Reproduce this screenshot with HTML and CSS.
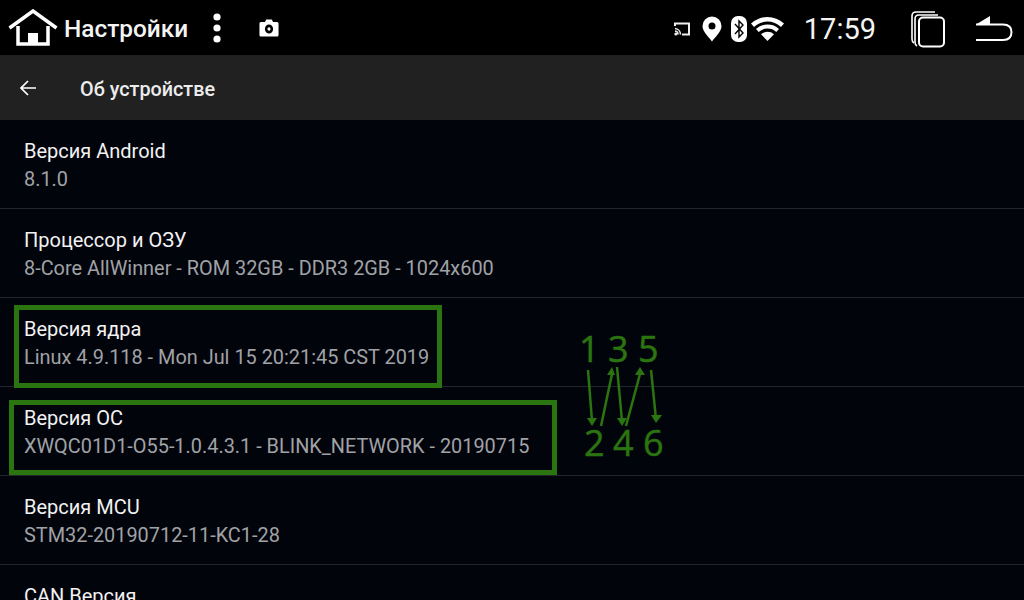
FILE: index.html
```html
<!DOCTYPE html>
<html>
<head>
	<title>Об устройстве</title>
	<link rel="stylesheet" href="styles.css">
</head>
<body>
	<header class="status-bar">
		<div class="status-left">
			<svg class="home-icon" width="50" height="37" viewBox="0 0 50 37">
				<path d="M1.500 19 L25 2 L48.500 19" fill="none" stroke="#fff" stroke-width="3.500"/>
				<path d="M10 17 V35 H40 V17" fill="none" stroke="#fff" stroke-width="3.500"/>
				<rect x="20" y="24" width="10" height="11" fill="#fff"/>
			</svg>
			<span class="status-title">Настройки</span>
			<svg class="dots-icon" width="10" height="32" viewBox="0 0 10 32">
				<circle cx="5" cy="5" r="3.600" fill="#fff"/>
				<circle cx="5" cy="16" r="3.600" fill="#fff"/>
				<circle cx="5" cy="27" r="3.600" fill="#fff"/>
			</svg>
			<svg class="camera-icon" width="20" height="18" viewBox="0 0 22 18" preserveAspectRatio="none">
				<path fill-rule="evenodd" fill="#fff" d="M2 3 H6.500 L8 0.500 H14 L15.500 3 H20 Q21.500 3 21.500 4.500 V16 Q21.500 17.500 20 17.500 H2 Q0.500 17.500 0.500 16 V4.500 Q0.500 3 2 3 Z M11 5.500 A4.500 4.500 0 1 0 11 14.500 A4.500 4.500 0 1 0 11 5.500 Z"/>
				<circle cx="11" cy="10" r="1.700" fill="#fff"/>
			</svg>
		</div>
		<div class="status-right">
			<svg class="cast-icon" width="16" height="14" viewBox="0 0 16 14">
				<path d="M1 4 V1.500 H15 V12.500 H8" fill="none" stroke="#eee" stroke-width="2"/>
				<path d="M1 6.500 A6 6 0 0 1 6.500 12.500 M1 9 A3.500 3.500 0 0 1 4 12.500" fill="none" stroke="#eee" stroke-width="1.600"/>
				<circle cx="1.800" cy="12" r="1.500" fill="#eee"/>
			</svg>
			<svg class="pin-icon" width="20" height="26" viewBox="0 0 20 26">
				<path fill-rule="evenodd" fill="#fff" d="M10 0.500 A9.500 9.500 0 0 1 19.500 10 C19.500 16 13 21 10 25.500 C7 21 0.500 16 0.500 10 A9.500 9.500 0 0 1 10 0.500 Z M10 6.500 A3.500 3.500 0 1 0 10 13.500 A3.500 3.500 0 1 0 10 6.500 Z"/>
			</svg>
			<svg class="bt-icon" width="16" height="26" viewBox="0 0 16 26">
				<rect x="0" y="0" width="16" height="26" rx="7" fill="#fff"/>
				<path d="M4 8 L12 17 L8 21 V5 L12 9 L4 18" fill="none" stroke="#000" stroke-width="1.400"/>
			</svg>
			<svg class="wifi-icon" width="33" height="25" viewBox="0 0 33 25">
				<path d="M0 7.500 A24 24 0 0 1 33 7.500 L30 11 A19.500 19.500 0 0 0 3 11 Z" fill="#fff"/>
				<path d="M5 13 A17 17 0 0 1 28 13 L25.300 16 A13 13 0 0 0 7.700 16 Z" fill="#fff"/>
				<path d="M10 18.200 A10 10 0 0 1 23 18.200 L16.500 25 Z" fill="#fff"/>
			</svg>
			<span class="clock">17:59</span>
			<svg class="recent-icon" width="36" height="38" viewBox="0 0 36 38">
				<path d="M25 2 H6 Q2 2 2 6 V29 Q2 32 4 33" fill="none" stroke="#fff" stroke-width="1.600"/>
				<path d="M28 5 H9 Q5 5 5 9 V32 Q5 35 7 36" fill="none" stroke="#fff" stroke-width="1.600"/>
				<rect x="9" y="7.500" width="25" height="29" rx="4" fill="#000" stroke="#fff" stroke-width="2"/>
			</svg>
			<svg class="back-icon" width="38" height="28" viewBox="0 0 38 28">
				<path d="M1 9.500 H28 Q36.500 9.500 36.500 17 Q36.500 25 28 25 H1" fill="none" stroke="#fff" stroke-width="2"/>
				<path d="M1 9.500 L15 1 V9.500 Z" fill="#fff"/>
			</svg>
		</div>
	</header>

	<div class="action-bar">
		<svg class="arrow-icon" width="16" height="16" viewBox="0 0 16 16">
			<path d="M16 8 H1.500 M8 1 L1 8 L8 15" fill="none" stroke="#fff" stroke-width="1.700"/>
		</svg>
		<span class="page-title">Об устройстве</span>
	</div>

	<main class="list">
		<div class="row">
			<div class="row-title">Версия Android</div>
			<div class="row-value">8.1.0</div>
		</div>
		<div class="row">
			<div class="row-title">Процессор и ОЗУ</div>
			<div class="row-value">8-Core AllWinner - ROM 32GB - DDR3 2GB - 1024x600</div>
		</div>
		<div class="row">
			<div class="row-title">Версия ядра</div>
			<div class="row-value">Linux 4.9.118 - Mon Jul 15 20:21:45 CST 2019</div>
		</div>
		<div class="row">
			<div class="row-title">Версия ОС</div>
			<div class="row-value">XWQC01D1-O55-1.0.4.3.1 - BLINK_NETWORK - 20190715</div>
		</div>
		<div class="row">
			<div class="row-title">Версия MCU</div>
			<div class="row-value">STM32-20190712-11-KC1-28</div>
		</div>
		<div class="row">
			<div class="row-title">CAN Версия</div>
		</div>
	</main>

	<!-- green marks drawn over the screenshot -->
	<div class="mark mark-kernel"></div>
	<div class="mark mark-os"></div>
	<span class="digit digit-1">1</span>
	<span class="digit digit-3">3</span>
	<span class="digit digit-5">5</span>
	<span class="digit digit-2">2</span>
	<span class="digit digit-4">4</span>
	<span class="digit digit-6">6</span>
	<svg class="mark-arrows" width="120" height="70" viewBox="0 0 120 70">
		<g fill="none" stroke="#2a7510" stroke-width="2.500">
			<path d="M28 1 L32 52"/>
			<path d="M41 57 L52 5"/>
			<path d="M57 -2 L62 52"/>
			<path d="M66 57 L80 5"/>
			<path d="M91 1 L96 50"/>
		</g>
		<g fill="#2a7510">
			<path d="M27 49 L37 49 L32 57 Z"/>
			<path d="M47 6 L55 6 L52 -2 Z"/>
			<path d="M57 49 L67 49 L62 57 Z"/>
			<path d="M75 6 L85 6 L80 -2 Z"/>
			<path d="M91 46 L102 46 L96 54 Z"/>
		</g>
	</svg>
</body>
</html>
```

FILE: styles.css
```css
html, body {
	margin: 0;
	padding: 0;
}

body {
	position: relative;
	width: 1024px;
	height: 600px;
	overflow: hidden;
	background-color: #02040c;
	font-family: "Roboto", sans-serif;
	color: #fff;
}

.status-bar {
	display: flex;
	justify-content: space-between;
	align-items: center;
	height: 55px;
	background-color: #000;
}

.status-left {
	display: flex;
	align-items: center;
	padding-left: 8px;
}

.status-title {
	margin-left: 6px;
	padding-top: 2px;
	font-size: 24.4px;
	font-weight: 500;
	color: #f4f4f4;
}

.dots-icon {
	margin-left: 24px;
}

.camera-icon {
	margin-left: 37px;
}

.status-right {
	display: flex;
	align-items: center;
	padding-top: 2px;
	padding-right: 11px;
}

.cast-icon {
	margin-right: 1px;
}

.pin-icon {
	margin-left: 11px;
}

.bt-icon {
	margin-left: 9px;
}

.wifi-icon {
	margin-left: 4px;
}

.clock {
	margin-left: 20px;
	font-size: 29px;
	color: #f4f4f4;
}

.recent-icon {
	margin-left: 34px;
}

.back-icon {
	margin-left: 29px;
}

.action-bar {
	display: flex;
	align-items: center;
	height: 65px;
	padding-left: 20px;
	background-color: #212121;
}

.page-title {
	margin-left: 44px;
	padding-top: 4px;
	font-size: 19.8px;
	font-weight: 500;
	color: #ececec;
}

.list {
	height: 480px;
	overflow: hidden;
}

.row {
	box-sizing: border-box;
	height: 89px;
	padding-top: 19px;
	padding-left: 24px;
	border-bottom: 1px solid #23262d;
}

.row-title {
	font-size: 20px;
	line-height: 24px;
	color: #f2f2f2;
}

.row-value {
	margin-top: 5px;
	font-size: 19.9px;
	line-height: 24px;
	color: #a0a2a6;
}

/* overlays */
.mark {
	position: absolute;
	box-sizing: border-box;
	border: 5px solid #2a7510;
}

.mark-kernel {
	left: 14px;
	top: 305px;
	width: 428px;
	height: 83px;
}

.mark-os {
	left: 9px;
	top: 400px;
	width: 548px;
	height: 75px;
}

.digit {
	position: absolute;
	font-family: "Open Sans", sans-serif;
	font-size: 36px;
	font-weight: 400;
	line-height: 36px;
	color: #2a7510;
	-webkit-text-stroke: 0.5px #2a7510;
}

.digit-1 { left: 579px; top: 331px; }
.digit-3 { left: 608px; top: 331px; }
.digit-5 { left: 638px; top: 331px; }
.digit-2 { left: 584px; top: 425px; }
.digit-4 { left: 613px; top: 425px; }
.digit-6 { left: 643px; top: 425px; }

.mark-arrows {
	position: absolute;
	left: 560px;
	top: 369px;
	overflow: visible;
}
```
